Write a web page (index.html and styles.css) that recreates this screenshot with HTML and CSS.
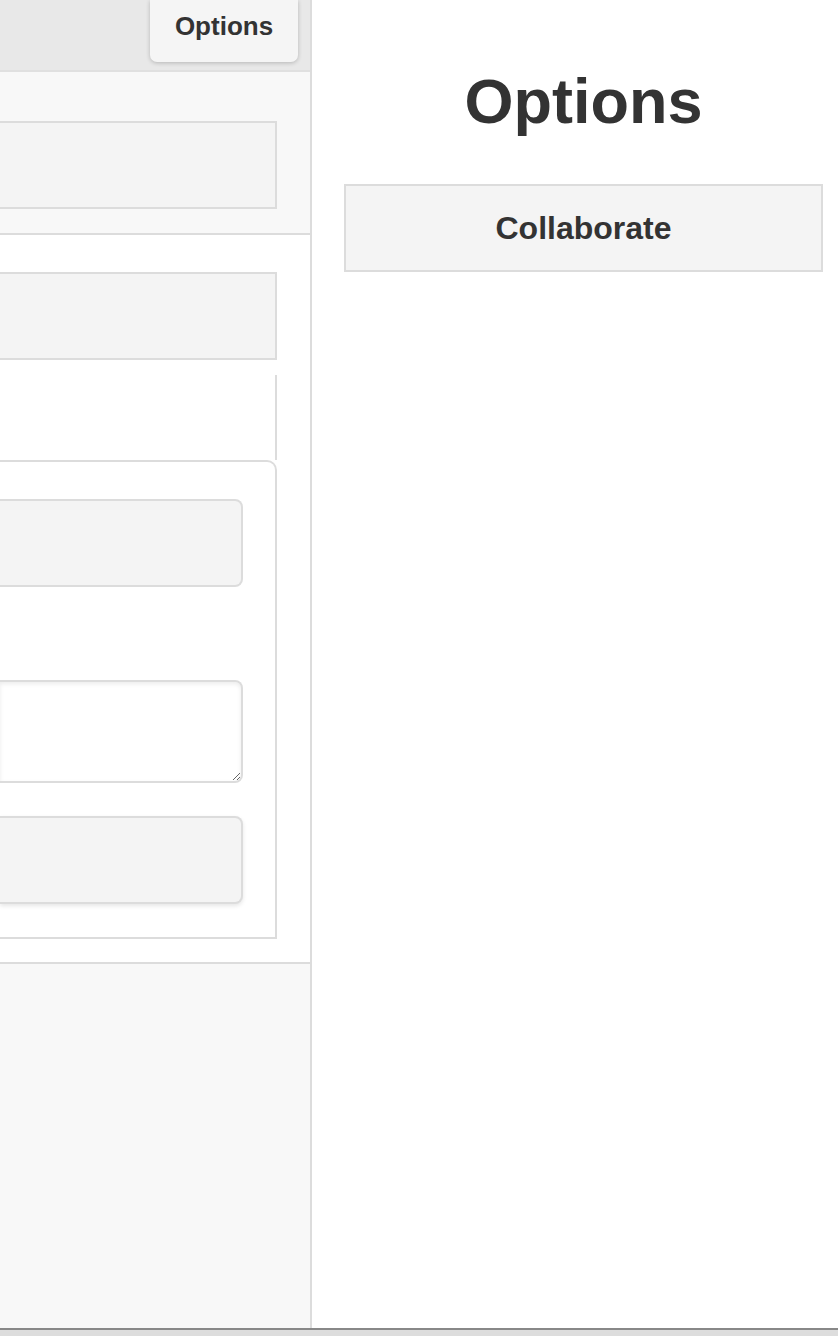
FILE: index.html
```html
<!DOCTYPE html>
<html>
<head>
<meta charset="utf-8">
<title>Options</title>
<link rel="stylesheet" href="styles.css">
</head>
<body>
<div class="app">
  <aside class="left">
    <div class="topbar">
      <div class="tab">Options</div>
    </div>
    <section class="sec1">
      <div class="box"></div>
    </section>
    <section class="sec2">
      <div class="box"></div>
      <div class="frame">
        <div class="stub"></div>
        <div class="fieldset">
          <div class="inner-box"></div>
          <textarea class="textarea"></textarea>
          <div class="inner-btn"></div>
        </div>
      </div>
    </section>
    <section class="sec3"></section>
  </aside>
  <main class="right">
    <h1 class="title">Options</h1>
    <div class="collab">Collaborate</div>
  </main>
</div>
<div class="footer"></div>
</body>
</html>
```
FILE: styles.css
```css
html, body {
  margin: 0;
  padding: 0;
  height: 1336px;
  overflow: hidden;
  font-family: "Liberation Sans", Arial, sans-serif;
  color: #333;
  background: #fff;
}

.app {
  display: flex;
  height: 1328px;
}

.left {
  width: 310px;
  flex: none;
  border-right: 2px solid #dcdcdc;
  background: #f8f8f8;
  display: flex;
  flex-direction: column;
  overflow: hidden;
}

.topbar {
  height: 70px;
  flex: none;
  background: #e8e8e8;
  border-bottom: 2px solid #e0e0e0;
  display: flex;
  justify-content: flex-end;
  padding-right: 12px;
}

.tab {
  width: 148px;
  height: 62px;
  box-sizing: border-box;
  padding-top: 13px;
  background: #f5f5f5;
  border-radius: 0 0 7px 7px;
  box-shadow: 0 1px 4px rgba(0, 0, 0, 0.22);
  font-weight: bold;
  font-size: 26px;
  line-height: 26px;
  text-align: center;
  color: #333;
}

.box {
  height: 88px;
  box-sizing: border-box;
  background: #f4f4f4;
  border: 2px solid #dcdcdc;
  border-left: none;
}

.sec1 {
  flex: none;
  padding: 49px 33px 24px 0;
  border-bottom: 2px solid #dcdcdc;
}

.sec2 {
  flex: none;
  background: #fff;
  padding: 37px 33px 23px 0;
  border-bottom: 2px solid #dcdcdc;
}

.frame {
  margin-top: 15px;
}

.stub {
  height: 85px;
  border-right: 2px solid #dcdcdc;
}

.fieldset {
  border-top: 2px solid #dcdcdc;
  border-right: 2px solid #dcdcdc;
  border-bottom: 2px solid #dcdcdc;
  border-top-right-radius: 10px;
  padding: 37px 32px 33px 0;
  display: flex;
  flex-direction: column;
}

.inner-box {
  height: 88px;
  box-sizing: border-box;
  background: #f4f4f4;
  border: 2px solid #dcdcdc;
  border-left: none;
  border-radius: 0 8px 8px 0;
}

.textarea {
  display: block;
  margin: 93px 0 0 0;
  height: 103px;
  box-sizing: border-box;
  background: #fff;
  border: 2px solid #dcdcdc;
  border-left: none;
  border-radius: 0 8px 8px 0;
  box-shadow: inset 0 2px 4px rgba(0, 0, 0, 0.08);
  resize: vertical;
  font-family: "Liberation Sans", Arial, sans-serif;
  padding: 0;
  outline: none;
}

.inner-btn {
  margin-top: 33px;
  height: 88px;
  box-sizing: border-box;
  background: #f4f4f4;
  border: 2px solid #dcdcdc;
  border-left: none;
  border-radius: 0 8px 8px 0;
  box-shadow: 0 2px 4px rgba(0, 0, 0, 0.1);
}

.sec3 {
  flex: 1;
  background: #f8f8f8;
}

.right {
  flex: 1;
  background: #fff;
  padding: 0 15px 0 32px;
}

.title {
  margin: 69px 0 0 0;
  font-size: 63px;
  line-height: 64px;
  font-weight: bold;
  text-align: center;
  color: #333;
}

.collab {
  margin-top: 51px;
  height: 88px;
  box-sizing: border-box;
  background: #f4f4f4;
  border: 2px solid #dcdcdc;
  display: flex;
  align-items: center;
  justify-content: center;
  font-weight: bold;
  font-size: 32px;
  color: #333;
}

.footer {
  height: 8px;
  box-sizing: border-box;
  border-top: 2px solid #888;
  background: #ddd;
}
```
